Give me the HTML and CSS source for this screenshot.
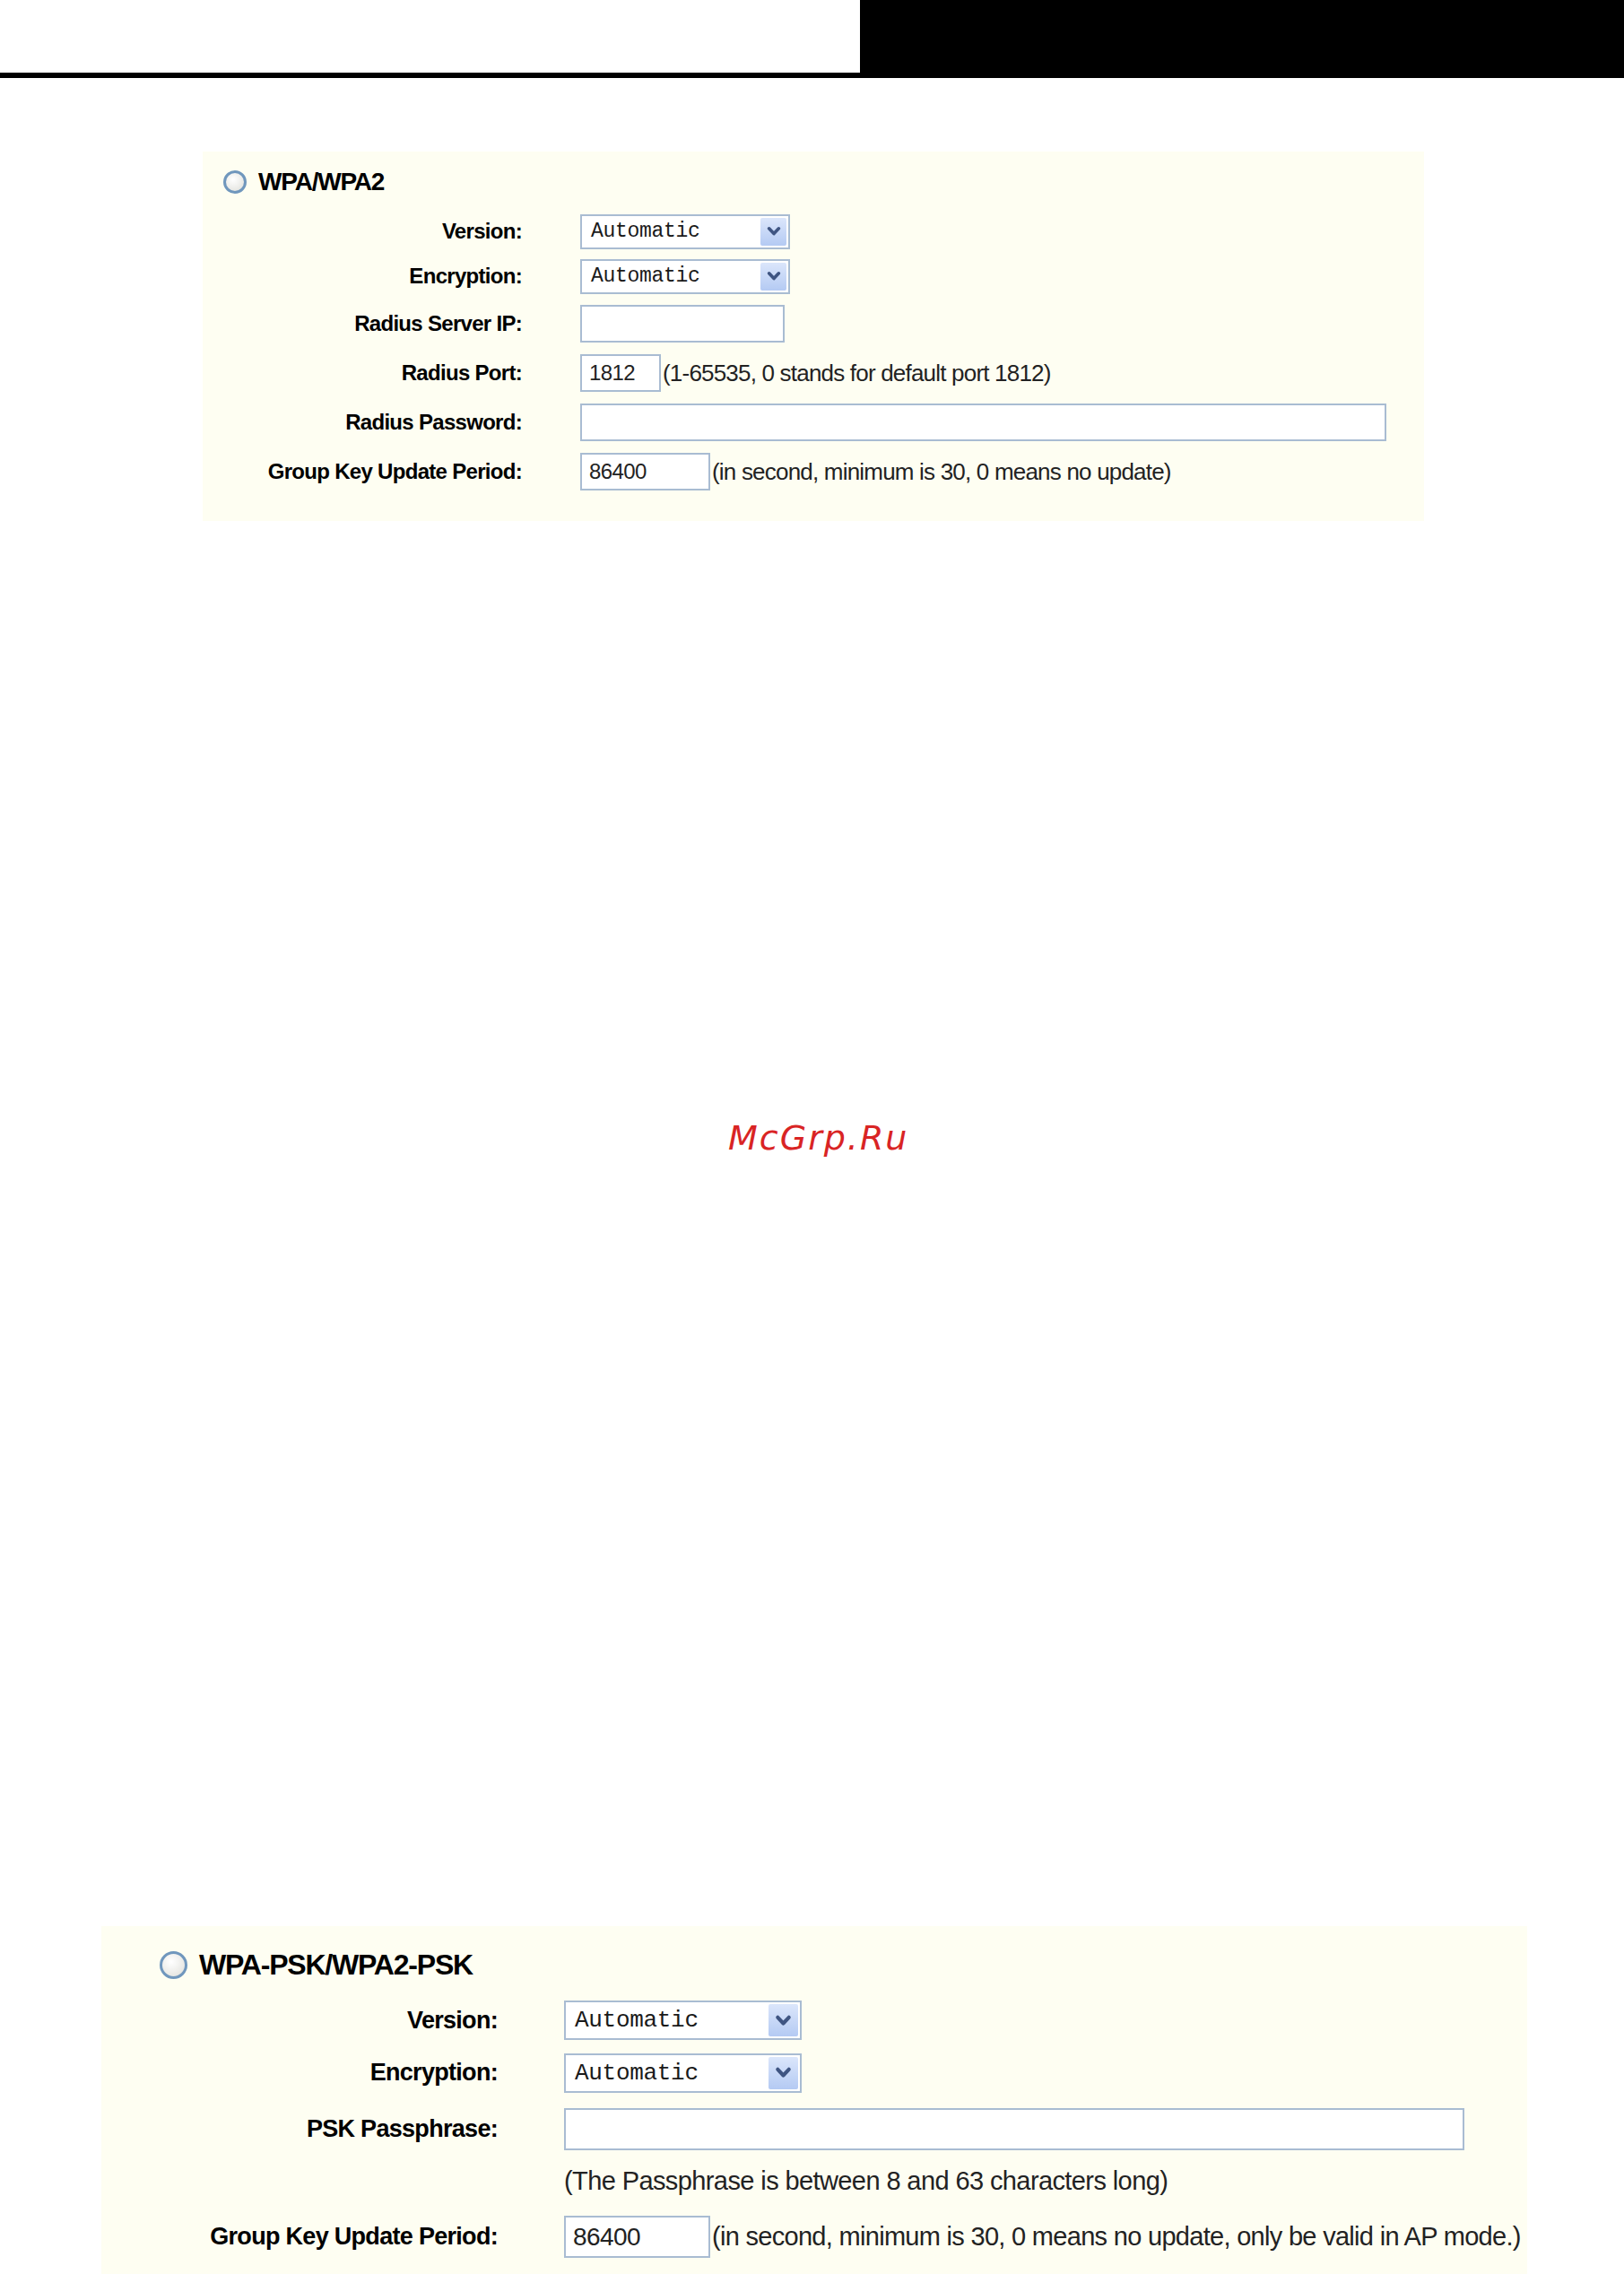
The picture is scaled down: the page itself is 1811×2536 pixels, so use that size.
FILE: index.html
```html
<!DOCTYPE html>
<html lang="en">
<head>
    <meta charset="UTF-8">
    <meta name="viewport" content="width=device-width, initial-scale=1.0">
    <title>Wireless Security</title>
    <link rel="stylesheet" href="styles.css">
</head>
<body>
    <!-- page header strip -->
    <div class="page-head">
        <div class="head-blank"></div>
        <div class="head-block"></div>
    </div>
    <div class="head-rule"></div>

    <!-- WPA/WPA2 (radius) -->
    <form class="panel panel-wpa">
        <label class="panel-title"><input type="radio" name="secType" class="radio"> WPA/WPA2</label>
        <div class="form-grid">
            <div class="label">Version:</div>
            <div class="field">
                <div class="select"><span class="select-text">Automatic</span><span class="select-btn"><svg viewBox="0 0 10 10"><path d="M2.3 3.4 L5 6.3 L7.7 3.4"/></svg></span></div>
            </div>

            <div class="label">Encryption:</div>
            <div class="field">
                <div class="select"><span class="select-text">Automatic</span><span class="select-btn"><svg viewBox="0 0 10 10"><path d="M2.3 3.4 L5 6.3 L7.7 3.4"/></svg></span></div>
            </div>

            <div class="label">Radius Server IP:</div>
            <div class="field"><input type="text" class="input input-ip"></div>

            <div class="label">Radius Port:</div>
            <div class="field"><input type="text" class="input input-port" value="1812"><span class="hint">(1-65535, 0 stands for default port 1812)</span></div>

            <div class="label">Radius Password:</div>
            <div class="field"><input type="text" class="input input-long"></div>

            <div class="label">Group Key Update Period:</div>
            <div class="field"><input type="text" class="input input-period" value="86400"><span class="hint">(in second, minimum is 30, 0 means no update)</span></div>
        </div>
    </form>

    <div class="watermark">McGrp.Ru</div>

    <!-- WPA-PSK/WPA2-PSK (passphrase) -->
    <form class="panel panel-psk">
        <label class="panel-title"><input type="radio" name="secType" class="radio"> WPA-PSK/WPA2-PSK</label>
        <div class="form-grid">
            <div class="label">Version:</div>
            <div class="field">
                <div class="select"><span class="select-text">Automatic</span><span class="select-btn"><svg viewBox="0 0 10 10"><path d="M2.3 3.4 L5 6.3 L7.7 3.4"/></svg></span></div>
            </div>

            <div class="label">Encryption:</div>
            <div class="field">
                <div class="select"><span class="select-text">Automatic</span><span class="select-btn"><svg viewBox="0 0 10 10"><path d="M2.3 3.4 L5 6.3 L7.7 3.4"/></svg></span></div>
            </div>

            <div class="label">PSK Passphrase:</div>
            <div class="field"><input type="text" class="input input-long"></div>

            <div class="label"></div>
            <div class="field"><span class="hint hint-plain">(The Passphrase is between 8 and 63 characters long)</span></div>

            <div class="label">Group Key Update Period:</div>
            <div class="field"><input type="text" class="input input-period" value="86400"><span class="hint">(in second, minimum is 30, 0 means no update, only be valid in AP mode.)</span></div>
        </div>
    </form>
</body>
</html>
```

FILE: styles.css
```css
body {
    margin: 0; /* no default margin */
    font-family: "Liberation Sans", Arial, sans-serif;
    color: #111;
    background-color: #fff;
    height: 2536px;
    overflow: hidden;
}

/* header strip */
.page-head {
    display: flex;
    height: 81px;
}
.head-blank {
    width: 959px;
    background-color: #fff;
}
.head-block {
    flex: 1;
    background-color: #000;
}
.head-rule {
    height: 6px;
    background-color: #000;
}

/* cream settings panel */
.panel {
    background-color: #fefef2;
    box-sizing: border-box;
}
.panel-wpa {
    margin: 82px 0 0 226px;
    width: 1362px;
    height: 412px;
}
.panel-psk {
    margin: 855px 0 0 113px;
    width: 1590px;
    height: 388px;
}

.panel-title {
    display: flex;
    align-items: center;
    box-sizing: border-box;
    font-weight: bold;
    color: #000;
}
.panel-wpa .panel-title {
    height: 64px;
    padding: 4px 0 0 23px;
    gap: 13px;
    font-size: 28px;
    letter-spacing: -1.2px;
}
.panel-psk .panel-title {
    height: 76px;
    padding: 10px 0 0 65px;
    gap: 13px;
    font-size: 32px;
    letter-spacing: -1.2px;
}

/* radio button, XP look */
.radio {
    appearance: none;
    margin: 0;
    border-radius: 50%;
    box-sizing: border-box;
    border: 3px solid #7097bd;
    background: radial-gradient(circle at 40% 35%, #ffffff 0%, #e8e8e4 70%, #d2d2cc 100%);
}
.panel-wpa .radio {
    width: 26px;
    height: 26px;
}
.panel-psk .radio {
    width: 31px;
    height: 31px;
}

/* label / field rows */
.form-grid {
    display: grid;
    align-items: center;
}
.panel-wpa .form-grid {
    grid-template-columns: 356px 1fr;
    grid-template-rows: 50px 50px 56px 54px 56px 54px;
    column-gap: 65px;
}
.panel-psk .form-grid {
    grid-template-columns: 442px 1fr;
    grid-template-rows: 58px 59px 67px 48px 77px;
    column-gap: 74px;
}

.label {
    text-align: right;
    font-weight: bold;
    color: #000;
    white-space: nowrap;
}
.panel-wpa .label {
    font-size: 24px;
    letter-spacing: -0.7px;
}
.panel-psk .label {
    font-size: 27px;
    letter-spacing: -0.7px;
}

.field {
    display: flex;
    align-items: center;
}

/* drop-down box */
.select {
    display: flex;
    align-items: stretch;
    box-sizing: border-box;
    border: 2px solid #a9bcd2;
    background-color: #fff;
    padding: 2px;
}
.select-text {
    flex: 1;
    display: flex;
    align-items: center;
    font-family: "Liberation Mono", "Courier New", monospace;
    color: #1a1a1a;
    letter-spacing: -0.3px;
}
.select-btn {
    display: flex;
    align-items: center;
    justify-content: center;
    background: linear-gradient(#dbe6fb, #b4caf3);
    border-radius: 2px;
}
.select-btn svg {
    fill: none;
    stroke: #3f5582;
    stroke-width: 1.8;
    stroke-linecap: round;
    stroke-linejoin: round;
}
.panel-wpa .select {
    width: 234px;
    height: 39px;
}
.panel-wpa .select-text {
    padding-left: 8px;
    font-size: 23px;
}
.panel-wpa .select-btn {
    width: 29px;
}
.panel-wpa .select-btn svg {
    width: 20px;
    height: 20px;
}
.panel-psk .select {
    width: 265px;
    height: 44px;
}
.panel-psk .select-text {
    padding-left: 8px;
    font-size: 26px;
}
.panel-psk .select-btn {
    width: 33px;
}
.panel-psk .select-btn svg {
    width: 23px;
    height: 23px;
}

/* text inputs */
.input {
    box-sizing: border-box;
    margin: 0;
    border: 2px solid #a9bcd2;
    background-color: #fff;
    padding: 0 8px;
    font-family: "Liberation Sans", Arial, sans-serif;
    color: #222;
    outline: none;
}
.panel-wpa .input {
    height: 42px;
    font-size: 24px;
    letter-spacing: -0.6px;
}
.panel-wpa .input-ip {
    width: 228px;
}
.panel-wpa .input-port {
    width: 90px;
}
.panel-wpa .input-long {
    width: 899px;
}
.panel-wpa .input-period {
    width: 145px;
}
.panel-psk .input {
    height: 47px;
    font-size: 28px;
    letter-spacing: -0.6px;
}
.panel-psk .input-long {
    width: 1004px;
}
.panel-psk .input-period {
    width: 163px;
}

/* hint text after a field */
.hint {
    margin-left: 2px;
    white-space: nowrap;
    color: #222;
}
.panel-wpa .hint {
    font-size: 26px;
    letter-spacing: -0.8px;
}
.panel-psk .hint {
    font-size: 29px;
    letter-spacing: -0.7px;
}
.panel-psk .hint-plain {
    margin-left: 0;
    letter-spacing: -0.6px;
}

/* site stamp */
.watermark {
    margin-top: 664px;
    padding-left: 812px;
    height: 48px;
    line-height: 48px;
    font-family: "DejaVu Sans", sans-serif;
    font-style: italic;
    font-size: 38px;
    letter-spacing: 2px;
    color: #d92424;
}
```
